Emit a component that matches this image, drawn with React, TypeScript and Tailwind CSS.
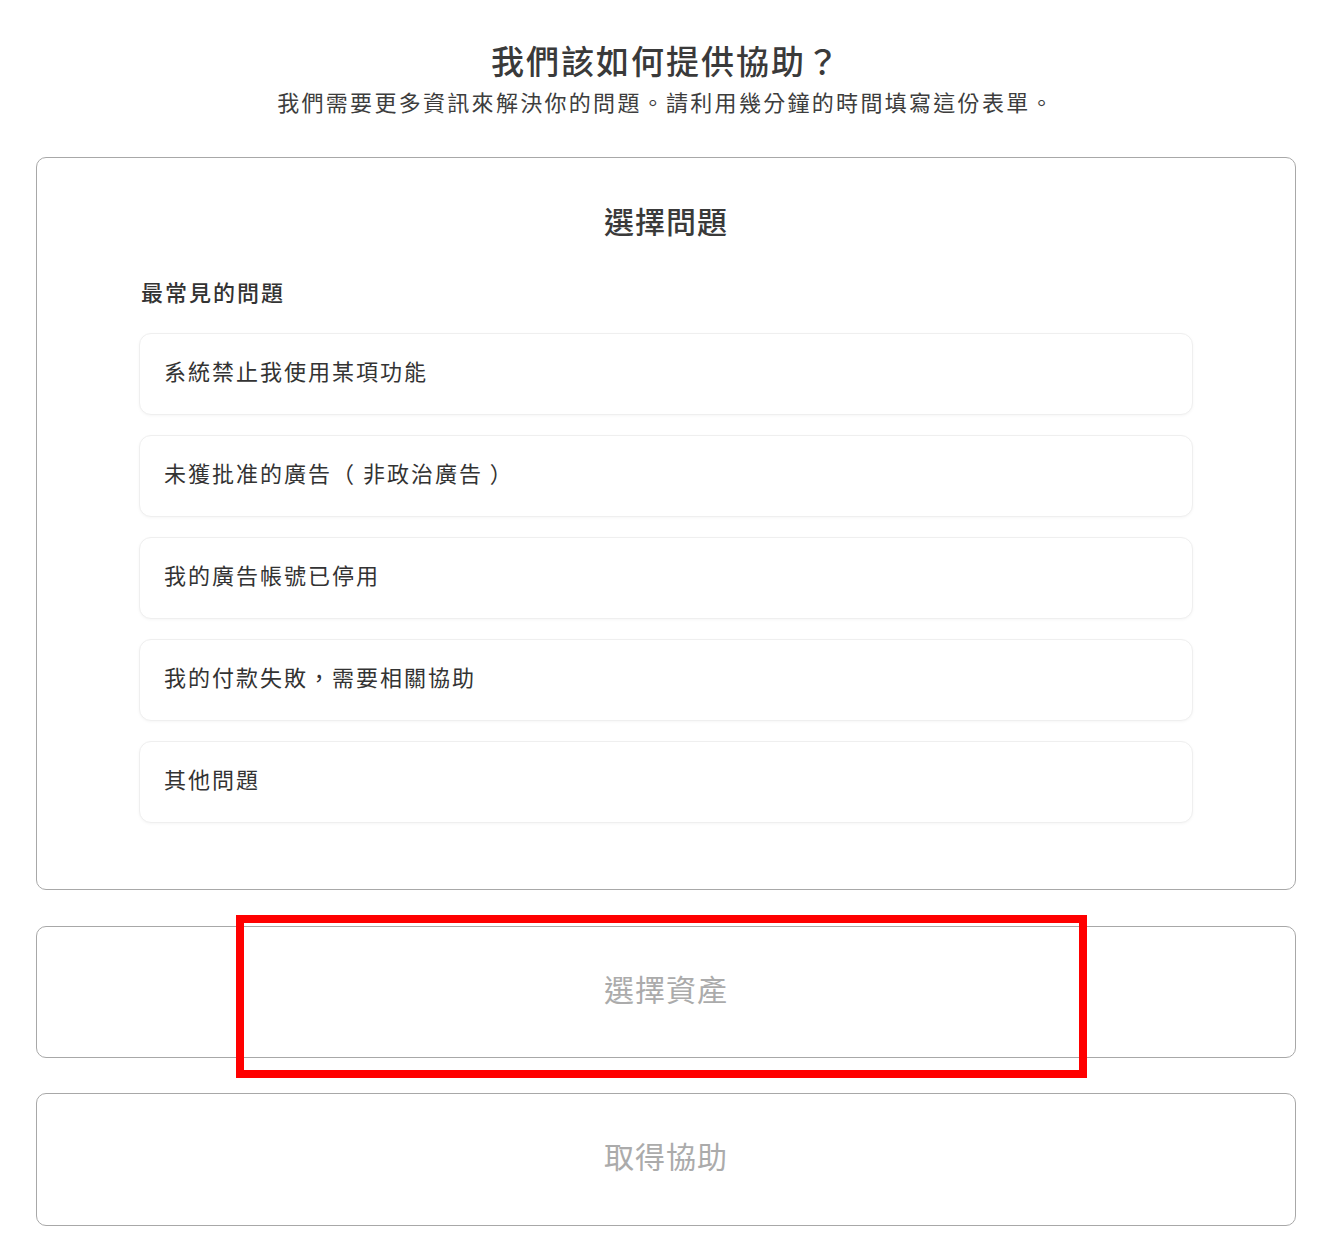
import React from 'react';

const issues = [
  '系統禁止我使用某項功能',
  '未獲批准的廣告（ 非政治廣告 ）',
  '我的廣告帳號已停用',
  '我的付款失敗，需要相關協助',
  '其他問題',
];

const font = 'font-["Noto_Sans_CJK_TC","Noto_Sans",sans-serif]';

const App: React.FC = () => {
  return (
    <div lang="zh-Hant-TW" className={`min-h-screen bg-white ${font} text-[#333] pl-[36px] pr-[41px] pt-[40px] pb-[22px]`}>
      <div className="text-center">
        <h1 className="text-[33px] leading-[40px] tracking-[2px] font-medium text-[#3a3a3a]">我們該如何提供協助？</h1>
        <p className="mt-[6px] text-[22px] leading-[30px] tracking-[2.3px] text-[#3d3d3d]">
          我們需要更多資訊來解決你的問題。請利用幾分鐘的時間填寫這份表單。
        </p>
      </div>

      <div className="mt-[41px] border-[1.5px] border-[#a8a8a8] rounded-[10px] px-[102px] pt-[42px] pb-[66px]">
        <h2 className="text-center text-[30px] leading-[40px] font-medium tracking-[1px] text-[#3a3a3a]">選擇問題</h2>
        <div className="mt-[36px] pl-[2px] text-[22px] leading-[30px] tracking-[2px] font-medium text-[#333]">最常見的問題</div>
        <div className="mt-[27px] flex flex-col gap-[20px]">
          {issues.map(item => (
            <button
              key={item}
              className="h-[82px] flex items-center px-[24px] pb-[8px] text-left border border-[#efefef] rounded-[12px] bg-white shadow-[0_1px_3px_rgba(0,0,0,0.04)] text-[22px] tracking-[2px] text-[#333]"
            >
              {item}
            </button>
          ))}
        </div>
      </div>

      <div className="relative mt-[36px]">
        <div className="h-[132px] pb-[8px] border-[1.5px] border-[#a8a8a8] rounded-[10px] flex items-center justify-center text-[30px] tracking-[1px] text-[#ababab]">
          選擇資產
        </div>
        <div className="absolute left-[200px] top-[-11px] w-[851px] h-[163px] border-[8px] border-[#ff0000] pointer-events-none" />
      </div>

      <div className="mt-[35px] h-[133px] pb-[8px] border-[1.5px] border-[#a8a8a8] rounded-[10px] flex items-center justify-center text-[30px] tracking-[1px] text-[#ababab]">
        取得協助
      </div>
    </div>
  );
};

export default App;
